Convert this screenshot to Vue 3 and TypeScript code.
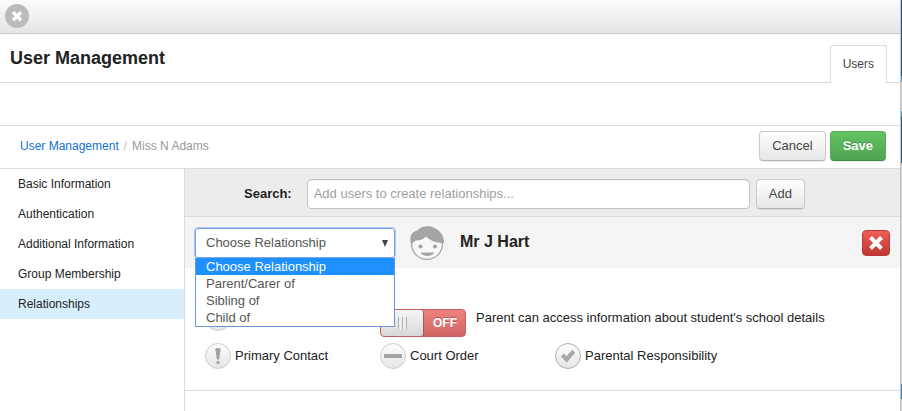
<script setup lang="ts">
import { ref } from 'vue'

const sections: string[] = [
  'Basic Information',
  'Authentication',
  'Additional Information',
  'Group Membership',
  'Relationships',
]
const active = ref('Relationships')

const relationships: string[] = ['Choose Relationship', 'Parent/Carer of', 'Sibling of', 'Child of']
const relationship = ref(relationships[0])
const open = ref(true)

const search = ref('')
const access = ref(false)
const lives = ref(false)
const primary = ref(false)
const court = ref(false)
const parental = ref(false)

function choose(option: string): void {
  relationship.value = option
  open.value = false
}
</script>

<template>
  <div class="page">
    <div class="panel">
      <div class="topbar">
        <button class="close" type="button" aria-label="Close">
          <svg width="24" height="24" viewBox="0 0 24 24">
            <circle cx="12" cy="12" r="12" fill="#b9bbbc" />
            <path d="M8 8.200 16 16.200M16 8.200 8 16.200" stroke="#fff" stroke-width="3.4" />
          </svg>
        </button>
      </div>

      <header class="heading">
        <h1>User Management</h1>
        <a class="tab" href="#users">Users</a>
      </header>

      <div class="spacer"></div>

      <div class="crumbs">
        <nav class="trail">
          <a href="#management">User Management</a>
          <span class="slash">/</span>
          <span class="current">Miss N Adams</span>
        </nav>
        <button class="btn" type="button">Cancel</button>
        <button class="btn save" type="button">Save</button>
      </div>

      <div class="body">
        <nav class="side">
          <a
            v-for="section in sections"
            :key="section"
            href="#section"
            :class="{ active: section === active }"
            @click.prevent="active = section"
            >{{ section }}</a
          >
        </nav>

        <main class="main">
          <form class="search" @submit.prevent>
            <label for="search">Search:</label>
            <input
              id="search"
              v-model="search"
              type="text"
              placeholder="Add users to create relationships..."
            />
            <button class="btn" type="submit">Add</button>
          </form>

          <section class="person">
            <div class="picker">
              <select v-model="relationship" aria-label="Relationship" @mousedown.prevent="open = !open">
                <option v-for="option in relationships" :key="option">{{ option }}</option>
              </select>
              <span class="arrow"></span>
              <ul v-if="open" class="options" role="listbox" aria-label="Relationship options">
                <li
                  v-for="option in relationships"
                  :key="option"
                  role="option"
                  :aria-selected="option === relationship"
                  @click="choose(option)"
                >
                  {{ option }}
                </li>
              </ul>
            </div>
            <svg class="avatar" width="36" height="36" viewBox="0 0 36 36">
              <circle cx="18" cy="19" r="15.4" fill="#f8f8f8" stroke="#a5a5a5" stroke-width="1.3" />
              <path
                d="M2.600 20C0 14 1 7 8.500 5.500 12 .8 20 .2 25 2.700 31.500 5.500 35 11 35 17.800 28 18.500 21.500 16 17.200 11.500 14.500 14 12 15.300 8.500 15.200 5 16 3.600 17.500 2.600 20Z"
                fill="#a5a5a5"
              />
              <circle cx="11.500" cy="21.500" r="2.100" fill="#a5a5a5" />
              <circle cx="26" cy="21.500" r="2.100" fill="#a5a5a5" />
              <path d="M11.600 27.500H25.200C24 32 12.800 32 11.600 27.500Z" fill="#a5a5a5" />
            </svg>
            <h2>Mr J Hart</h2>
            <button class="remove" type="button" aria-label="Remove relationship">
              <svg width="16" height="16" viewBox="0 0 16 16">
                <path d="M2.500 2.500 13.500 13.500M13.500 2.500 2.500 13.500" stroke="#fff" stroke-width="4" />
              </svg>
            </button>
          </section>

          <section class="flags">
            <label class="flag">
              <input v-model="lives" type="checkbox" aria-label="Lives with" />
            </label>
            <label class="access">
              <span class="switch">
                <input v-model="access" type="checkbox" />
                <span class="knob"><i></i></span>
                <span class="state">{{ access ? 'ON' : 'OFF' }}</span>
              </span>
              <span>Parent can access information about student's school details</span>
            </label>
            <label class="flag">
              <input v-model="primary" type="checkbox" />
              <svg viewBox="0 0 26 26" width="26" height="26">
                <path d="M10.300 5.500Q13 4.500 15.700 5.500L14.200 16.500H11.800Z" fill="#a3a3a3" />
                <circle cx="13" cy="19.500" r="1.700" fill="#a3a3a3" />
              </svg>
              <span>Primary Contact</span>
            </label>
            <label class="flag">
              <input v-model="court" type="checkbox" />
              <svg viewBox="0 0 26 26" width="26" height="26">
                <path d="M4 11H22V15H4Z" fill="#a3a3a3" />
              </svg>
              <span>Court Order</span>
            </label>
            <label class="flag dark">
              <input v-model="parental" type="checkbox" />
              <svg viewBox="0 0 26 26" width="26" height="26">
                <path d="M6 13.500 8.900 10.600 11.600 13.300 17.300 6.800 20.200 9.700 11.700 19.400Z" fill="#a8a8a8" />
              </svg>
              <span>Parental Responsibility</span>
            </label>
          </section>
        </main>
      </div>
    </div>
    <div class="edge"></div>
  </div>
</template>

<style>
body {
  background: #fff;
}
</style>

<style scoped>
* {
  box-sizing: border-box;
}

.page {
  display: grid;
  grid-template-columns: 1fr 1px;
  min-height: 100vh;
  overflow: hidden;
  font-family: 'Liberation Sans', Arial, sans-serif;
  font-size: 12px;
  line-height: 18px;
  color: #222;
}

.edge {
  background: linear-gradient(
    #17598b 76px,
    #5c94bd 76px 82px,
    #cdcdcd 82px 111px,
    #5c94bd 111px 117px,
    #17598b 117px 163px,
    #d2d2d2 163px 384px,
    #2583c4 384px 399px,
    #d2d2d2 399px
  );
}

.panel {
  display: flex;
  flex-direction: column;
  border-right: 1px solid #c5c5c5;
}

.topbar {
  display: flex;
  align-items: center;
  height: 34px;
  padding: 0 5px 2px;
  border-bottom: 1px solid #c8c8c8;
  background: linear-gradient(#fbfbfb, #e5e5e5);
}

.close {
  display: flex;
  padding: 0;
  border: 0;
  background: none;
}

.heading {
  display: flex;
  justify-content: space-between;
  align-items: flex-end;
  height: 49px;
  padding: 0 13px 0 10px;
  border-bottom: 1px solid #dadada;
}

h1 {
  align-self: center;
  margin: 0;
  font-size: 18px;
  line-height: 24px;
}

.tab {
  height: 38px;
  margin-bottom: -1px;
  padding: 0 12px;
  border: 1px solid #dadada;
  border-bottom: 0;
  border-radius: 3px 3px 0 0;
  background: #fff;
  color: #444;
  line-height: 37px;
  text-decoration: none;
}

.spacer {
  height: 43px;
  border-bottom: 1px solid #dadada;
}

.crumbs {
  display: flex;
  align-items: center;
  gap: 4px;
  height: 43px;
  padding: 0 14px 2px 20px;
  border-bottom: 1px solid #dadada;
}

.trail {
  display: flex;
  gap: 5px;
  margin-right: auto;
}

.trail a {
  color: #1170d2;
  text-decoration: none;
}

.slash {
  color: #c0c0c0;
}

.current {
  color: #999;
}

.btn {
  height: 30px;
  padding: 0 12px;
  border: 1px solid #cbcbcb;
  border-bottom-color: #b3b3b3;
  border-radius: 4px;
  background: linear-gradient(#fff, #e6e6e6);
  box-shadow: 0 1px 1px rgba(0, 0, 0, 0.08);
  color: #444;
  font: 13px/20px 'Liberation Sans', Arial, sans-serif;
}

.save {
  border-color: #55ae55 #55ae55 #418c41;
  background: linear-gradient(#62c462, #51a351);
  color: #fff;
  font-weight: bold;
  text-shadow: 0 -1px 0 rgba(0, 0, 0, 0.25);
}

.body {
  display: grid;
  grid-template-columns: 185px 1fr;
  flex: 1;
}

.side {
  border-right: 1px solid #dadada;
}

.side a {
  display: block;
  padding: 6px 18px;
  color: #222;
  text-decoration: none;
}

.side .active {
  background: #d7eefc;
}

.search {
  display: flex;
  align-items: center;
  gap: 6px;
  height: 48px;
  padding: 2px 95px 0 59px;
  border-bottom: 1px solid #dadada;
  background: #ececec;
}

.search label {
  margin-right: 9px;
  font-size: 13px;
  font-weight: bold;
}

.search input {
  flex: 1;
  min-width: 0;
  height: 30px;
  padding: 0 6px;
  border: 1px solid #c4c4c4;
  border-radius: 4px;
  background: #fff;
  box-shadow: inset 0 1px 1px rgba(0, 0, 0, 0.08);
  font: 13px/20px 'Liberation Sans', Arial, sans-serif;
}

.search input::placeholder {
  color: #a0a0a0;
}

.person {
  display: flex;
  align-items: center;
  height: 51px;
  padding: 0 10px;
  background: #f4f4f4;
}

.picker {
  position: relative;
  width: 200px;
  margin-top: 1px;
}

select {
  display: block;
  appearance: none;
  width: 100%;
  height: 30px;
  padding: 0 10px;
  border: 1px solid #78a3ea;
  border-radius: 3px;
  outline: 1px solid #a9c6f5;
  outline-offset: 0;
  background: #fff;
  color: #555;
  font: 13px/20px 'Liberation Sans', Arial, sans-serif;
}

.arrow {
  position: absolute;
  top: 12px;
  right: 7px;
  border: 3px solid transparent;
  border-top: 7px solid #444;
  border-bottom: 0;
  pointer-events: none;
}

.options {
  position: absolute;
  z-index: 2;
  top: 30px;
  left: 0;
  width: 100%;
  margin: 0;
  padding: 0;
  border: 1px solid #6d95d8;
  border-top: 0;
  background: #fff;
  color: #555;
  font-size: 13px;
  line-height: 16px;
  list-style: none;
}

.options li {
  padding: 1px 10px 0;
}

.options [aria-selected='true'] {
  background: #1e90ff;
  color: #fff;
}

.avatar {
  margin-left: 14px;
}

h2 {
  margin: 0 auto 0 15px;
  padding-bottom: 2px;
  font-size: 16px;
  line-height: 22px;
}

.remove {
  display: flex;
  align-items: center;
  justify-content: center;
  width: 28px;
  height: 26px;
  padding: 0;
  border: 1px solid #b93a35;
  border-radius: 4px;
  background: linear-gradient(#ee5f5b, #bd362f);
}

.flags {
  display: grid;
  grid-template-columns: repeat(3, 175px);
  row-gap: 6px;
  padding: 37px 20px 21px;
  border-bottom: 1px solid #dadada;
  font-size: 13px;
}

.flag {
  display: grid;
  grid-template-columns: 26px auto;
  column-gap: 4px;
  align-items: center;
  align-self: start;
}

.flag input {
  appearance: none;
  grid-area: 1 / 1;
  width: 26px;
  height: 26px;
  margin: 0;
  border: 1px solid #cdcdcd;
  border-radius: 50%;
  background: linear-gradient(#fcfcfc, #e6e6e6);
}

.flag svg {
  grid-area: 1 / 1;
  pointer-events: none;
}

.dark input {
  border-color: #ababab;
}

.access {
  display: flex;
  grid-column: 2 / 4;
  gap: 10px;
  padding-top: 4px;
  white-space: nowrap;
}

.switch {
  display: grid;
  grid-template-columns: 44px 42px;
  height: 28px;
}

.switch input {
  appearance: none;
  grid-area: 1 / 1 / 2 / 3;
  margin: 0;
  border: 1px solid #c25f5d;
  border-radius: 4px;
  background: linear-gradient(#ef827f, #cf6663);
}

.knob {
  display: flex;
  align-items: center;
  justify-content: center;
  grid-area: 1 / 1;
  margin: 1px 0 1px 1px;
  border-right: 1px solid #a65957;
  border-radius: 3px;
  background: linear-gradient(#f6f6f6, #d8d8d8);
}

.knob i {
  width: 9px;
  height: 12px;
  background: repeating-linear-gradient(90deg, #b0b0b0 0 1px, #eee 1px 4px);
}

.state {
  grid-area: 1 / 2;
  color: #fff;
  font-size: 12px;
  font-weight: bold;
  line-height: 28px;
  text-align: center;
  text-shadow: 0 -1px 0 rgba(0, 0, 0, 0.25);
}
</style>
